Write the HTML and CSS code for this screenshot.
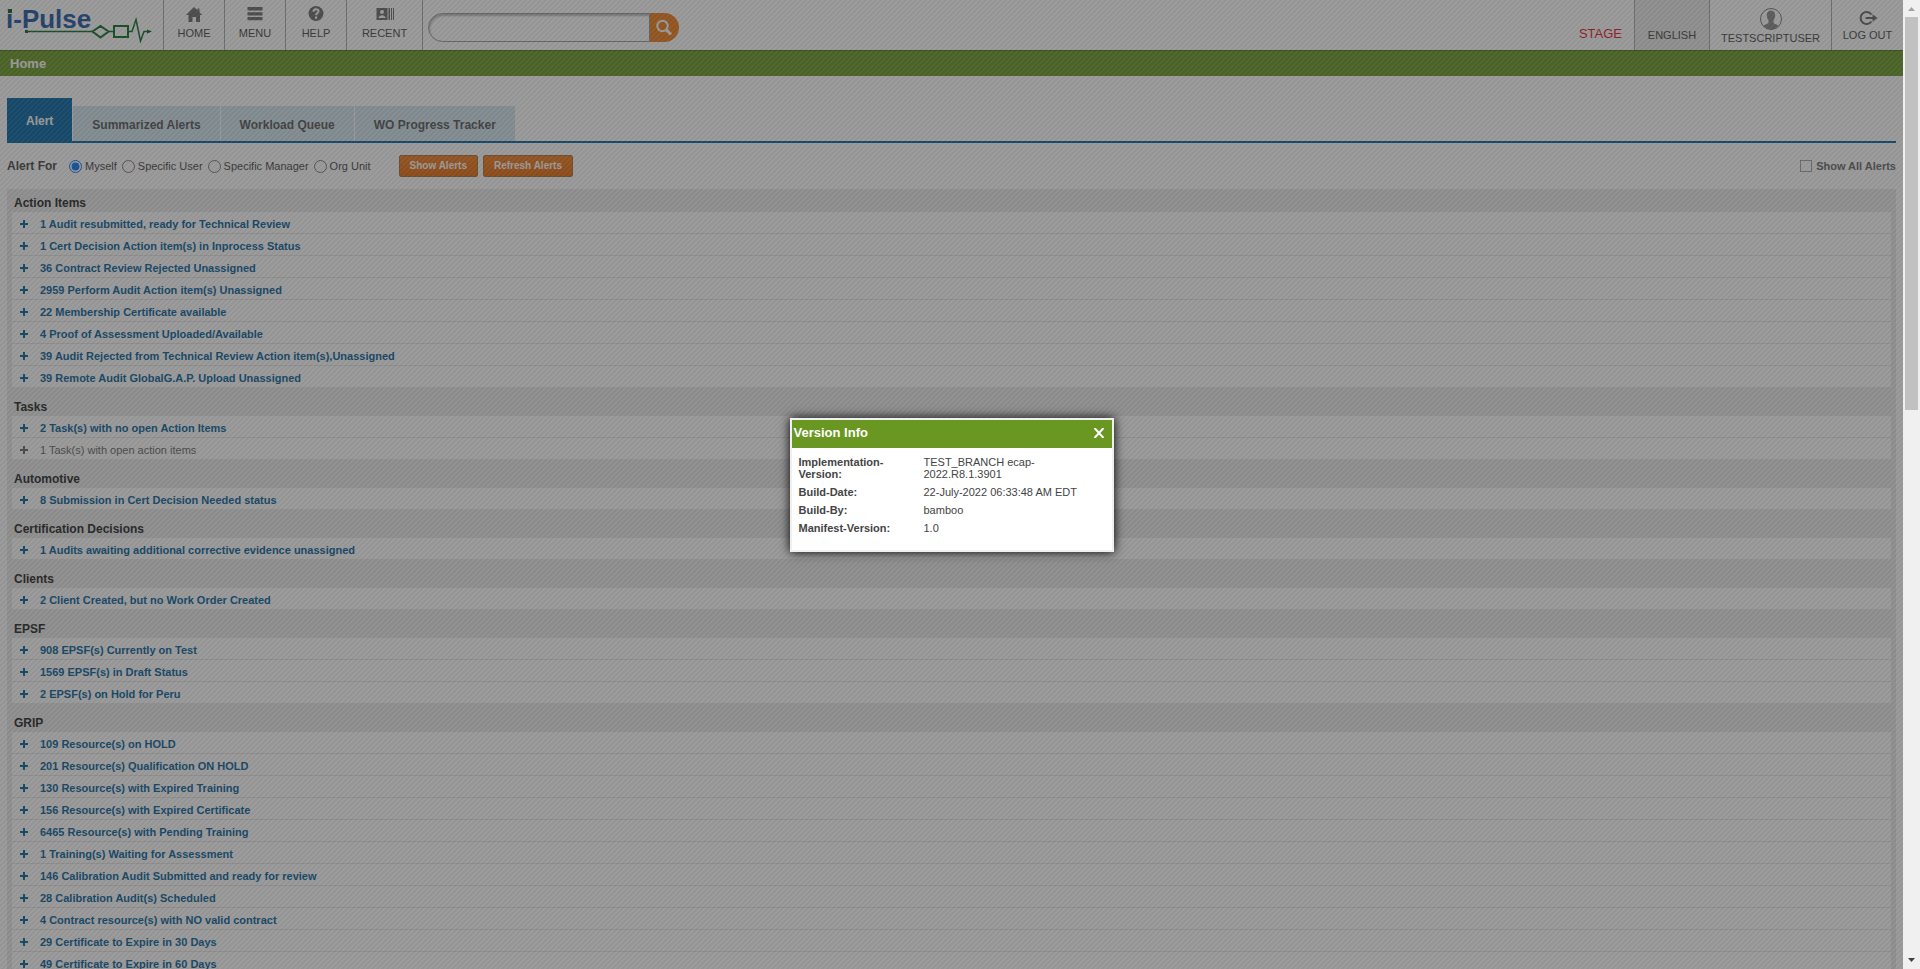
FILE: index.html
```html
<!DOCTYPE html>
<html lang="en">
<head>
<meta charset="utf-8">
<title>i-Pulse - Home</title>
<link rel="stylesheet" href="styles.css">
</head>
<body>
<div class="app">
  <header class="header">
    <a class="logo" href="#" aria-label="i-Pulse">
      <svg width="155" height="48" viewBox="0 0 155 48">
        <text x="6" y="28" class="logo-text">i-Pulse</text>
        <rect class="logo-dot" x="8" y="9" width="4" height="4"/>
        <rect class="logo-dot" x="25" y="30" width="3" height="3"/>
        <path class="logo-line" d="M27 31.500H93M109 31.500H113M129 31.500H132L136 19.500L140.500 41L144 31.500H148"/>
        <path class="logo-shape" d="M92.500 31.500L100.500 26L108.500 31.500L100.500 37.500ZM114 26H128V37H114Z"/>
        <path class="logo-dot" d="M147 29.500L152 31.500L147 33.500Z"/>
      </svg>
    </a>
    <nav class="nav">
      <a class="nav-item" href="#">
        <svg width="18" height="18" viewBox="0 0 18 18"><path class="ink" d="M9 2L1 10H3.500V17H7.500V12H11V17H15V10H17.200L14.500 7.200V3.500H12.500V5.300Z"/></svg>
        <span>HOME</span></a>
      <a class="nav-item" href="#">
        <svg width="18" height="18" viewBox="0 0 18 18"><path class="ink" d="M1.500 2H16.500V5.500H1.500ZM1.500 7.200H16.500V10.400H1.500ZM1.500 12H16.500V15.200H1.500Z"/></svg>
        <span>MENU</span></a>
      <a class="nav-item" href="#">
        <svg width="18" height="18" viewBox="0 0 18 18"><circle class="ink" cx="9" cy="8.500" r="7.500"/><path class="mark" d="M6.500 6.800C6.500 3.300 11.700 3.500 11.500 6.500C11.300 8.400 9 8.200 9 10.300"/><rect class="paper" x="8" y="11.500" width="2.200" height="2.200"/></svg>
        <span>HELP</span></a>
      <a class="nav-item nav-item-wide" href="#">
        <svg width="18" height="18" viewBox="0 0 18 18"><rect class="ink" x="0.500" y="3" width="11" height="12"/><circle class="paper" cx="6" cy="7" r="2"/><path class="paper" d="M2.500 13C2.500 9.200 9.500 9.200 9.500 13Z"/><path class="ink" d="M12.500 3H14V15H12.500ZM15 3H16V15H15ZM17 3H18V15H17Z"/></svg>
        <span>RECENT</span></a>
    </nav>
    <form class="search">
      <input class="search-input" type="text" aria-label="Search">
      <button class="search-button" type="button" aria-label="Go">
        <svg width="18" height="18" viewBox="0 0 18 18"><circle class="lens" cx="7.500" cy="7" r="5.200"/><path class="handle" d="M11 10.500L16 15.500"/></svg>
      </button>
    </form>
    <div class="account">
      <span class="stage">STAGE</span>
      <a class="language" href="#">ENGLISH</a>
      <a class="account-item user" href="#">
        <svg width="22" height="22" viewBox="0 0 22 22"><circle class="avatar-ring" cx="11" cy="11" r="10.500"/><path class="avatar" d="M11 2.500C7.800 2.500 6.600 5 6.800 7.800C7 10 7.800 11.500 8.500 12.400V15C7 16.300 4.500 16.500 3.300 17.800A10 10 0 0 0 18.700 17.800C17.500 16.500 15 16.300 13.500 15V12.400C14.200 11.500 15 10 15.200 7.800C15.400 5 14.200 2.500 11 2.500Z"/></svg>
        <span>TESTSCRIPTUSER</span></a>
      <a class="account-item logout" href="#">
        <svg width="20" height="16" viewBox="0 0 20 16"><path class="logout-ring" d="M13.500 4.500A6 6 0 1 0 13.500 11.500"/><path class="logout-arrow" d="M7.500 8H17"/><path class="logout-head" d="M14.500 4.300L19.500 8L14.500 11.700Z"/></svg>
        <span>LOG OUT</span></a>
    </div>
  </header>
  <h1 class="page-title">Home</h1>
  <main class="content">
    <nav class="tabs">
      <a class="tab tab-active" href="#">Alert</a>
      <a class="tab" href="#">Summarized Alerts</a>
      <a class="tab" href="#">Workload Queue</a>
      <a class="tab" href="#">WO Progress Tracker</a>
    </nav>
    <form class="filters">
      <span class="filters-label">Alert For</span>
      <label class="radio"><input type="radio" name="scope" checked>Myself</label>
      <label class="radio"><input type="radio" name="scope">Specific User</label>
      <label class="radio"><input type="radio" name="scope">Specific Manager</label>
      <label class="radio"><input type="radio" name="scope">Org Unit</label>
      <div class="actions">
        <button class="button" type="button">Show Alerts</button>
        <button class="button" type="button">Refresh Alerts</button>
      </div>
      <label class="show-all"><input type="checkbox">Show All Alerts</label>
    </form>
    <div class="panel">
      <section><h2>Action Items</h2>
        <ul>
          <li><a href="#">1 Audit resubmitted, ready for Technical Review</a></li>
          <li><a href="#">1 Cert Decision Action item(s) in Inprocess Status</a></li>
          <li><a href="#">36 Contract Review Rejected Unassigned</a></li>
          <li><a href="#">2959 Perform Audit Action item(s) Unassigned</a></li>
          <li><a href="#">22 Membership Certificate available</a></li>
          <li><a href="#">4 Proof of Assessment Uploaded/Available</a></li>
          <li><a href="#">39 Audit Rejected from Technical Review Action item(s),Unassigned</a></li>
          <li><a href="#">39 Remote Audit GlobalG.A.P. Upload Unassigned</a></li>
        </ul></section>
      <section><h2>Tasks</h2>
        <ul>
          <li><a href="#">2 Task(s) with no open Action Items</a></li>
          <li><a class="seen" href="#">1 Task(s) with open action items</a></li>
        </ul></section>
      <section><h2>Automotive</h2>
        <ul>
          <li><a href="#">8 Submission in Cert Decision Needed status</a></li>
        </ul></section>
      <section><h2>Certification Decisions</h2>
        <ul>
          <li><a href="#">1 Audits awaiting additional corrective evidence unassigned</a></li>
        </ul></section>
      <section><h2>Clients</h2>
        <ul>
          <li><a href="#">2 Client Created, but no Work Order Created</a></li>
        </ul></section>
      <section><h2>EPSF</h2>
        <ul>
          <li><a href="#">908 EPSF(s) Currently on Test</a></li>
          <li><a href="#">1569 EPSF(s) in Draft Status</a></li>
          <li><a href="#">2 EPSF(s) on Hold for Peru</a></li>
        </ul></section>
      <section><h2>GRIP</h2>
        <ul>
          <li><a href="#">109 Resource(s) on HOLD</a></li>
          <li><a href="#">201 Resource(s) Qualification ON HOLD</a></li>
          <li><a href="#">130 Resource(s) with Expired Training</a></li>
          <li><a href="#">156 Resource(s) with Expired Certificate</a></li>
          <li><a href="#">6465 Resource(s) with Pending Training</a></li>
          <li><a href="#">1 Training(s) Waiting for Assessment</a></li>
          <li><a href="#">146 Calibration Audit Submitted and ready for review</a></li>
          <li><a href="#">28 Calibration Audit(s) Scheduled</a></li>
          <li><a href="#">4 Contract resource(s) with NO valid contract</a></li>
          <li><a href="#">29 Certificate to Expire in 30 Days</a></li>
          <li><a href="#">49 Certificate to Expire in 60 Days</a></li>
        </ul></section>
    </div>
  </main>
  <div class="overlay">
    <div class="dialog" role="dialog" aria-labelledby="dialog-title">
      <div class="dialog-bar">
        <h2 id="dialog-title">Version Info</h2>
        <button class="dialog-close" type="button" aria-label="Close">
          <svg width="12" height="10" viewBox="0 0 12 10"><path d="M1.500 0L10.500 10M10.500 0L1.500 10"/></svg>
        </button>
      </div>
      <dl class="version">
        <dt>Implementation-Version:</dt><dd>TEST_BRANCH ecap-2022.R8.1.3901</dd>
        <dt>Build-Date:</dt><dd>22-July-2022 06:33:48 AM EDT</dd>
        <dt>Build-By:</dt><dd>bamboo</dd>
        <dt>Manifest-Version:</dt><dd>1.0</dd>
      </dl>
    </div>
  </div>
</div>
<div class="scrollbar" aria-hidden="true">
  <svg width="17" height="17" viewBox="0 0 17 17"><path class="arrow-up" d="M5 11L8.500 7L12 11Z"/></svg>
  <div class="scroll-track"><div class="scroll-thumb"></div></div>
  <svg width="17" height="17" viewBox="0 0 17 17"><path class="arrow-down" d="M5 6L8.500 10L12 6Z"/></svg>
</div>
</body>
</html>
```
FILE: styles.css
```css
* { box-sizing: border-box; }
body {
  margin: 0;
  height: 100vh;
  display: flex;
  overflow: hidden;
  background: #fff;
  color: #444;
  font: 11px/12px "Liberation Sans", Arial, sans-serif;
}
a { color: inherit; text-decoration: none; }
h1, h2, ul, dl, dd { margin: 0; padding: 0; }
button { padding: 0; border: 0; font: inherit; cursor: pointer; }
input { margin: 0; }
svg { display: block; }

.app { flex: 1; position: relative; overflow: hidden; }

/* Header */
.header { display: flex; height: 50px; }
.logo { width: 163px; }
.logo-text { font: bold 26px "Liberation Sans", Arial, sans-serif; fill: #1c54a4; }
.logo-dot { fill: #0a5c20; }
.logo-line { fill: none; stroke: #0a6c24; stroke-width: 1.500; }
.logo-shape { fill: none; stroke: #0a6c24; stroke-width: 2; }
.nav { display: flex; border-left: 1px solid #a8a8a8; }
.nav-item {
  width: 61px;
  padding-top: 5px;
  display: flex;
  flex-direction: column;
  align-items: center;
  gap: 4px;
  border-right: 1px solid #a8a8a8;
}
.nav-item-wide { width: 76px; }
.ink { fill: #6b6b6b; }
.paper { fill: #fff; }
.mark { fill: none; stroke: #fff; stroke-width: 2; }
.search { display: flex; margin: 13px 0 0 5px; height: 29px; }
.search-input {
  width: 222px;
  border: 1px solid #9a9a9a;
  border-radius: 15px 0 0 15px;
  background: #fff;
  box-shadow: inset 1px 2px 2px #bbb;
  padding: 0 12px;
  font: inherit;
  outline: 0;
}
.search-button {
  width: 29px;
  padding-left: 5px;
  background: #f07c18;
  border-radius: 0 15px 15px 0;
}
.lens { fill: none; stroke: #fff; stroke-width: 2; }
.handle { stroke: #fff; stroke-width: 3; }
.account { display: flex; margin-left: auto; }
.stage { padding: 28px 12px 0 0; font-size: 13px; color: #e8101c; }
.language {
  width: 76px;
  padding-top: 29px;
  text-align: center;
  background: #eaeaea;
  border: 1px solid #a8a8a8;
  border-width: 0 1px;
}
.account-item { display: flex; flex-direction: column; align-items: center; }
.user { width: 122px; padding-top: 8px; gap: 2px; border-right: 1px solid #a8a8a8; }
.logout { width: 71px; padding-top: 10px; gap: 3px; }
.avatar-ring { fill: #fff; stroke: #777; }
.avatar { fill: #888; }
.logout-ring { fill: none; stroke: #666; stroke-width: 2; }
.logout-arrow { stroke: #666; stroke-width: 2; }
.logout-head { fill: #666; }

.page-title {
  height: 26px;
  padding-left: 10px;
  border-top: 1px solid #4e7018;
  background: #699622;
  color: #fff;
  font-size: 13px;
  line-height: 25px;
}

/* Tabs */
.content { padding: 22px 7px 0; }
.tabs {
  display: flex;
  align-items: flex-end;
  gap: 1px;
  border-bottom: 2px solid #0365a3;
}
.tab {
  padding: 3px 19px 0;
  background: #d3e6ee;
  color: #555;
  font-size: 12px;
  font-weight: bold;
  line-height: 32px;
}
.tab-active { background: #0365a3; color: #fff; line-height: 40px; }

.filters { display: flex; align-items: center; height: 46px; }
.filters-label { margin-right: 12px; font-size: 12px; font-weight: bold; }
.radio { display: flex; align-items: center; gap: 3px; margin-right: 5px; }
.radio input { width: 13px; height: 13px; }
.actions { display: flex; gap: 5px; margin-left: 23px; }
.button {
  height: 22px;
  padding: 0 10px;
  border: 1px solid #a86c34;
  border-radius: 2px;
  background: linear-gradient(#f27c1e, #e86a0a);
  color: #fff;
  font-size: 10px;
  font-weight: bold;
}
.show-all {
  display: flex;
  align-items: center;
  gap: 4px;
  margin-left: auto;
  color: #666;
  font-weight: bold;
}
.show-all input {
  appearance: none;
  width: 12px;
  height: 12px;
  border: 1px solid #a0a0a0;
}

/* Alert groups */
.panel { padding: 0 5px 6px; background: #ebebeb; }
.panel section + section { padding-top: 6px; }
.panel h2 { padding: 5px 0 0 2px; color: #222; font-size: 12px; line-height: 18px; }
.panel ul { list-style: none; background: #fff; }
.panel li + li { border-top: 1px solid #e6e6e6; }
.panel li a {
  display: flex;
  align-items: center;
  gap: 12px;
  padding: 3px 8px 0;
  color: #03609a;
  font-weight: bold;
  line-height: 18px;
}
.panel li a::before {
  content: "";
  width: 8px;
  height: 8px;
  background:
    linear-gradient(currentColor, currentColor) center / 8px 2px no-repeat,
    linear-gradient(currentColor, currentColor) center / 2px 8px no-repeat;
}
.panel li .seen { color: #666; font-weight: normal; }

/* Modal */
.overlay {
  position: absolute;
  inset: 0;
  display: grid;
  place-items: center;
  background: linear-gradient(135deg,
    rgba(44, 44, 44, .5) 25%, rgba(60, 60, 60, .5) 25% 50%,
    rgba(44, 44, 44, .5) 50% 75%, rgba(60, 60, 60, .5) 75%) 0 0 / 5px 5px;
}
.dialog {
  width: 324px;
  border: 2px solid #f0f0f0;
  background: #fff;
  box-shadow: 0 0 10px #000;
}
.dialog-bar {
  display: flex;
  align-items: center;
  justify-content: space-between;
  height: 28px;
  padding: 0 7px 2px 2px;
  background: #699721;
  color: #fff;
}
.dialog-bar h2 { font-size: 13px; line-height: 16px; }
.dialog-close { background: none; }
.dialog-close path { stroke: #fff; stroke-width: 2; }
.version {
  display: grid;
  grid-template-columns: 105px 1fr;
  gap: 6px 20px;
  padding: 8px 14px 16px 7px;
}
.version dt { font-weight: bold; }
.version dd { max-width: 160px; }
.version dd:first-of-type { max-width: 120px; }

/* Scrollbar */
.scrollbar { width: 17px; display: flex; flex-direction: column; background: #f0f0f0; }
.scroll-track { flex: 1; padding: 0 2px; }
.scroll-thumb { height: 42%; background: #c1c1c1; }
.arrow-up { fill: #a3a3a3; }
.arrow-down { fill: #404040; }
```
